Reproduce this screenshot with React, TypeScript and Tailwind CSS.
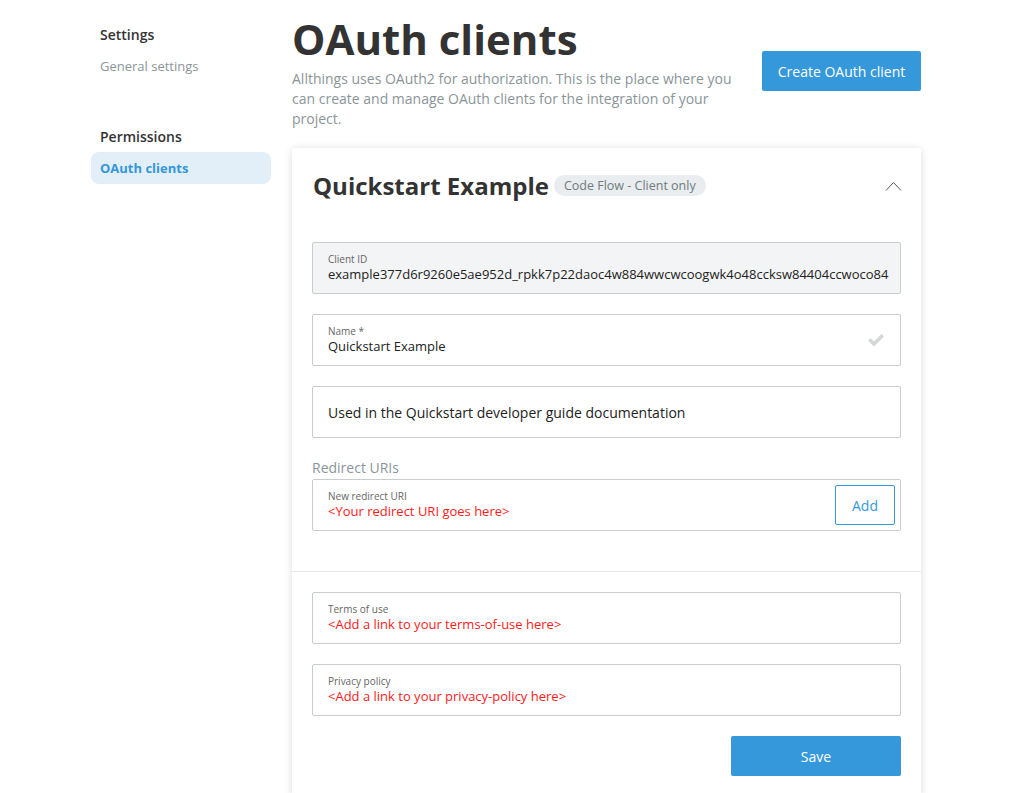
import React from 'react'

function Field({
  label,
  value,
  red,
  disabled,
  right,
}: {
  label: string
  value: string
  red?: boolean
  disabled?: boolean
  right?: React.ReactNode
}) {
  return (
    <div
      className={`flex h-[52px] items-center rounded-[2px] border border-[#c9cdcf] pl-[15px] pr-[5px] ${
        disabled ? 'bg-[#f3f4f5]' : 'bg-white'
      }`}
    >
      <div className="min-w-0 flex-1 overflow-hidden">
        <div className="text-[10px] leading-[12px] text-[#666]">{label}</div>
        <div
          className={`whitespace-nowrap text-[13px] leading-[19px] ${
            red ? 'text-[#ff1a1a]' : 'text-[#222]'
          }`}
        >
          {value}
        </div>
      </div>
      {right}
    </div>
  )
}

export default function App() {
  return (
    <div
      className="min-h-[793px] bg-white pl-[91px]"
      style={{ fontFamily: '"Open Sans", sans-serif' }}
    >
      <div className="flex gap-[21px]">
        <aside className="w-[180px] shrink-0 pt-[24px]">
          <div className="pl-[9px] text-[14px] font-semibold leading-[22px] text-[#333]">Settings</div>
          <div className="mt-[10px] pl-[9px] text-[13px] leading-[20px] text-[#8a9598]">General settings</div>
          <div className="mt-[50px] pl-[9px] text-[14px] font-semibold leading-[22px] text-[#333]">Permissions</div>
          <div className="mt-[4px] flex h-[32px] items-center rounded-lg bg-[#e2eff9] pl-[9px] pt-[1px] text-[13px] font-bold text-[#3597d9]">
            OAuth clients
          </div>
        </aside>

        <main className="w-[629px] shrink-0 pt-[12px]">
          <div className="flex items-center justify-between">
            <div>
              <h1 className="text-[42px] font-bold leading-[54px] text-[#333]">OAuth clients</h1>
              <p className="mt-[3px] w-[450px] text-[14px] leading-[20px] text-[#8a9598]">
                Allthings uses OAuth2 for authorization. This is the place where you can create and manage OAuth
                clients for the integration of your project.
              </p>
            </div>
            <button className="mt-[1px] h-[40px] w-[159px] rounded-[2px] bg-[#3598db] text-[14px] text-white">
              Create OAuth client
            </button>
          </div>

          <div className="mt-[19px] rounded-[3px] bg-white shadow-[0_1px_8px_rgba(0,0,0,0.14)]">
            <div className="px-[20px] pt-[21px] pb-[40px]">
              <div className="flex h-[34px] items-center pl-[1px]">
                <h2 className="text-[24px] font-bold leading-[34px] text-[#333]">Quickstart Example</h2>
                <span className="ml-[5px] mt-[-1px] rounded-full bg-[#e9edef] px-[10px] text-[12.5px] leading-[21px] text-[#6f7b7e]">
                  Code Flow - Client only
                </span>
                <svg className="ml-auto mr-[-1px]" width="17" height="10" viewBox="0 0 17 10" fill="none">
                  <path d="M1 9.5 8.5 1.5 16 9.5" stroke="#555" strokeWidth="1" />
                </svg>
              </div>

              <div className="mt-[39px] flex flex-col gap-[20px]">
                <Field
                  label="Client ID"
                  value="example377d6r9260e5ae952d_rpkk7p22daoc4w884wwcwcoogwk4o48ccksw84404ccwoco84"
                  disabled
                />
                <Field
                  label="Name *"
                  value="Quickstart Example"
                  right={
                    <svg className="mr-[10px]" width="18" height="14" viewBox="0 0 18 14">
                      <path d="M1 7.5 3.5 5 7 8.5 14.5 1 17 3.5 7 13.5Z" fill="#d4d6d8" />
                    </svg>
                  }
                />
                <div className="flex h-[52px] items-center rounded-[2px] border border-[#c9cdcf] pl-[15px] text-[14px] text-[#222]">
                  Used in the Quickstart developer guide documentation
                </div>
              </div>

              <div className="mt-[20px] text-[14px] leading-[20px] text-[#8a9598]">Redirect URIs</div>
              <div className="mt-[1px]">
                <Field
                  label="New redirect URI"
                  value="<Your redirect URI goes here>"
                  red
                  right={
                    <button className="h-[40px] w-[60px] rounded-[2px] border border-[#3598db] text-[14px] text-[#3598db]">
                      Add
                    </button>
                  }
                />
              </div>
            </div>

            <div className="border-t border-[#e6e8e9] px-[20px] pt-[20px] pb-[20px]">
              <div className="flex flex-col gap-[20px]">
                <Field label="Terms of use" value="<Add a link to your terms-of-use here>" red />
                <Field label="Privacy policy" value="<Add a link to your privacy-policy here>" red />
              </div>
              <div className="mt-[20px] flex justify-end">
                <button className="h-[40px] w-[170px] rounded-[2px] bg-[#3598db] text-[14px] text-white">Save</button>
              </div>
            </div>
          </div>
        </main>
      </div>
    </div>
  )
}
